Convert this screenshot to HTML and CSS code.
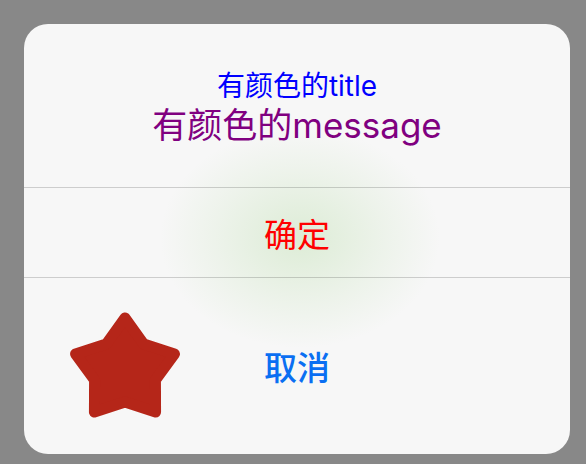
FILE: index.html
```html
<!DOCTYPE html>
<html lang="zh">
<head>
<meta charset="utf-8">
<link rel="stylesheet" href="styles.css">
</head>
<body>
<div class="alert">
  <div class="glow"></div>
  <div class="header">
    <div class="title">有颜色的title</div>
    <div class="message">有颜色的message</div>
  </div>
  <div class="action confirm">确定</div>
  <div class="action cancel">
    <svg class="star" width="120" height="120" viewBox="0 0 120 120">
      <polygon points="60,8 78.81,34.11 109.46,43.93 90.43,69.89 90.57,102.07 60,92 29.43,102.07 29.57,69.89 10.54,43.93 41.19,34.11" fill="#b52619" stroke="#b52619" stroke-width="11" stroke-linejoin="round"/>
    </svg>
    取消
  </div>
</div>
</body>
</html>
```
FILE: styles.css
```css
html, body {
  margin: 0;
  padding: 0;
  background: #888888;
}
body {
  width: 586px;
  height: 464px;
  overflow: hidden;
}
.alert {
  position: relative;
  margin: 24px 0 0 24px;
  width: 546px;
  height: 430px;
  background: #f7f7f7;
  border-radius: 24px;
  overflow: hidden;
  display: flex;
  flex-direction: column;
  font-family: Inter, "Noto Sans CJK SC", sans-serif;
}
.header {
  position: relative;
  height: 163px;
  box-sizing: border-box;
  padding-top: 45px;
  text-align: center;
}
.title {
  font-size: 28px;
  line-height: 34px;
  color: #0000ff;
}
.message {
  font-size: 35px;
  line-height: 44px;
  color: #800080;
}
.action {
  position: relative;
  border-top: 1px solid rgba(0, 0, 0, 0.17);
  display: flex;
  align-items: center;
  justify-content: center;
  font-family: "Noto Sans CJK SC", sans-serif;
  font-size: 33px;
}
.confirm {
  height: 89px;
  color: #ff0000;
}
.cancel {
  flex: 1;
  color: #0a6ff2;
  font-weight: 500;
}
.star {
  position: absolute;
  left: 41px;
  top: 32px;
}
.glow {
  position: absolute;
  inset: 0;
  pointer-events: none;
  background: radial-gradient(ellipse 140px 110px at 276px 214px, rgba(170, 215, 150, 0.34), rgba(170, 215, 150, 0.13) 60%, rgba(170, 215, 150, 0) 100%);
}
```
